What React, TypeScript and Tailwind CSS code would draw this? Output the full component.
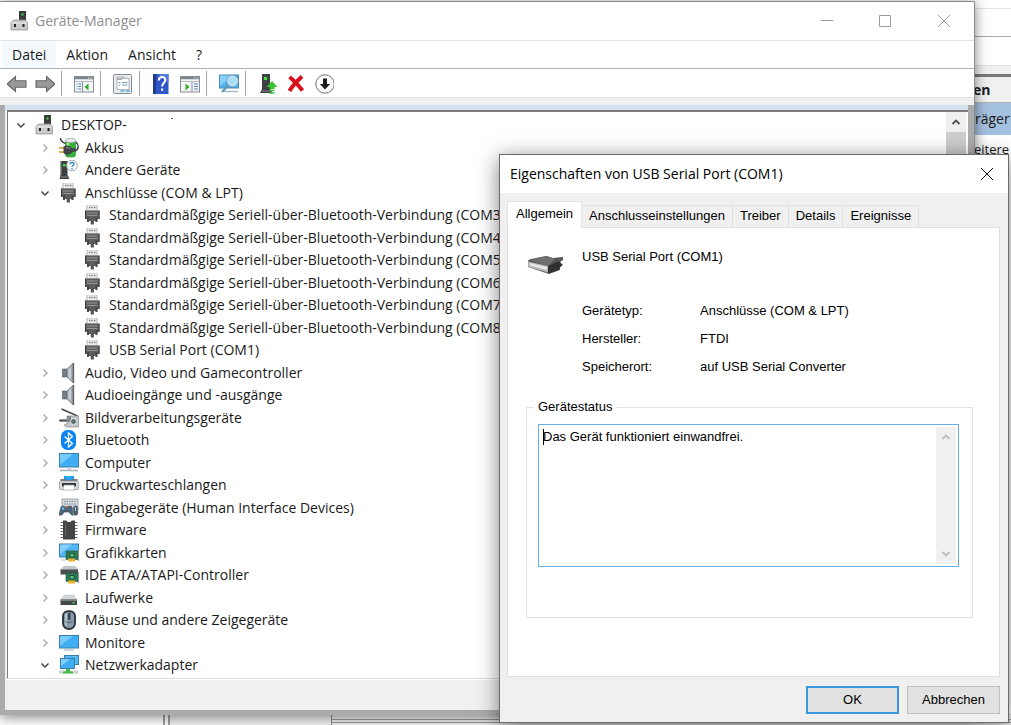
import type { ReactNode } from 'react';

type IconProps = { children: ReactNode; className?: string };

const Icon = ({ children, className = 'h-5 w-5' }: IconProps) => (
  <svg viewBox="0 0 20 20" className={`${className} shrink-0`} fill="none" aria-hidden="true">
    {children}
  </svg>
);

const icons: Record<string, ReactNode> = {
  root: (
    <>
      <rect x="9" y="0" width="7" height="11" fill="#3b3b3b" />
      <rect x="11.5" y="2.5" width="2" height="2" fill="#3ce04a" />
      <path d="M1 11.500 3.500 9h12l2 2.500v7.500H1z" fill="#c9cacb" stroke="#8b8c8e" strokeWidth=".7" />
      <path d="M1.500 12h15.500" stroke="#ececec" />
      <rect x="4" y="13" width="2" height="3" fill="#222" />
      <rect x="12.500" y="13" width="2" height="3" fill="#222" />
    </>
  ),
  battery: (
    <>
      <rect x="6.500" y="1.500" width="10" height="17.500" rx="2.500" fill="#35b335" stroke="#258a2b" strokeWidth=".6" />
      <path d="M9 5v9" stroke="#a7f07c" strokeWidth="2.500" />
      <ellipse cx="11.500" cy="2.500" rx="5" ry="2.200" fill="#e4e9ed" stroke="#8f9aa6" strokeWidth=".7" />
      <path d="M1.500 0c0 3 2 4.500 5 5.500M17 4c3 3 3 8.500-1.500 9" stroke="#3a3f44" strokeWidth="1.400" />
      <path d="M0 10h6M0 14h6" stroke="#c29a1d" strokeWidth="1.600" />
      <path d="M4.500 8.500c4-2 7-.5 8.500 2l3.500-.5v3.500l-3.500.5c-2 3.500-6 3.500-8.500 1z" fill="#40444a" />
      <path d="M7 10c2-.8 3.500 0 4.500 1" stroke="#9da2a8" />
    </>
  ),
  other: (
    <>
      <path d="M1.500 1h7v14l2 4H.5l1-4z" fill="#3c3e40" />
      <path d="M2.500 1v14" stroke="#63676a" />
      <rect x="4" y="4" width="2.500" height="2.500" fill="#42e53b" />
      <path d="M1 17h9" stroke="#85888a" />
      <circle cx="13" cy="5.500" r="5.300" fill="#f5f8fb" stroke="#a7adb4" strokeWidth="1" />
      <path d="M11.200 4.200c0-2.500 3.800-2.400 3.800-.1 0 1.500-2 1.500-2 3M13 8v1.300" stroke="#2783c6" strokeWidth="1.300" />
    </>
  ),
  port: (
    <g transform="translate(-1 -1)">
      <path d="M5 .8h10v6H5z" fill="#ededed" stroke="#a4a4a4" strokeWidth=".8" />
      <path d="M7 3.500h1.400M9.500 3.500h1.400M12 3.500h1.400" stroke="#777" strokeWidth="1.400" />
      <path d="M3 6.500h14.500V15h-2l-1 2H6l-1-2H3z" fill="#5c5e60" />
      <path d="M3.500 6.500V15M17 6.500V15" stroke="#3b3d3f" />
      <path d="M5 9h10.500M5 11.500h10.500" stroke="#929496" />
      <path d="M5 13h2v5H5zM13.500 13h2v5h-2z" fill="#454749" />
      <path d="M8.700 16h3.200v4.500H8.700z" fill="#54575a" />
    </g>
  ),
  speaker: (
    <>
      <path d="M3.500 6h4.500v8H3.500z" fill="#747e86" stroke="#50575c" strokeWidth=".6" />
      <path d="M8 6 14 .3v19.400L8 14z" fill="#a3abb1" stroke="#70777d" strokeWidth=".7" />
      <path d="m9.500 6.500 2.500-3v13l-2.500-3z" fill="#ccd1d5" />
      <path d="M14.500 0v20" stroke="#5b646b" strokeWidth="1.300" />
    </>
  ),
  imaging: (
    <>
      <path d="m2.500 1 16 7" stroke="#4a4a4a" strokeWidth="1.700" />
      <path d="M1 11h9v3H1z" fill="#9a9c9e" />
      <path d="M0 12.500h10" stroke="#565656" strokeWidth="1.400" />
      <path d="M8 8h11.500v11H7l-2-2 3-1z" fill="#c5c7c9" stroke="#8c8e90" strokeWidth=".7" />
      <path d="M8 8h4v6H8z" fill="#85888a" />
      <circle cx="14.500" cy="13.500" r="2.800" fill="#4c555b" stroke="#e6e6e6" />
      <circle cx="14.500" cy="13.500" r="1" fill="#42a29f" />
    </>
  ),
  bluetooth: (
    <>
      <rect x="2" y="0" width="15" height="20" rx="6.500" fill="#0a84f5" />
      <path d="m5.500 6.500 8 7-4 3.500V3l4 3.500-8 7" stroke="#fff" strokeWidth="1.300" />
    </>
  ),
  computer: (
    <>
      <rect x=".5" y=".5" width="19" height="13.500" fill="#41aef3" stroke="#397da9" />
      <path d="M1 1h13L1 12z" fill="#75cbfb" />
      <path d="M8 14.500h4v2H8z" fill="#cfd5da" />
      <path d="M1 17.500h18" stroke="#a4b4c2" strokeWidth="1.600" />
    </>
  ),
  printer: (
    <>
      <path d="M5 1h10v6H5z" fill="#209bea" />
      <path d="M8 1h3v3H8z" fill="#32d5bf" />
      <path d="M1.500 4h17v4h-17z" fill="#75797d" />
      <path d="M7 2h6v3H7z" fill="#29a0ec" />
      <rect x=".5" y="6" width="19" height="8.500" rx="1" fill="#d7d9db" stroke="#8d9195" strokeWidth=".7" />
      <path d="M3 8h14v3.500H3z" fill="#2f3438" />
      <path d="M5 10h10l1 5H4z" fill="#fff" stroke="#9ca0a3" strokeWidth=".7" />
    </>
  ),
  hid: (
    <>
      <path d="M3 1h16v11H3z" fill="#d5dade" stroke="#828b92" strokeWidth=".7" />
      <path d="M5 3.500h12M5 6h12" stroke="#7e8990" strokeWidth="1.200" strokeDasharray="1.500 1" />
      <path d="M2 9c2-2 3 0 5 0s4-2 6 0l2 8c-3 1-4-2-5-3H5c-1 2-2 4-5 3z" fill="#4b6575" stroke="#31434f" strokeWidth=".6" />
      <circle cx="4" cy="10.500" r="1.300" fill="#6db7ed" />
      <circle cx="8" cy="9" r="1" fill="#ef5b45" />
      <rect x="14" y="7.500" width="5" height="10" rx="2.200" fill="#485b69" stroke="#a7b4bc" strokeWidth=".6" />
      <path d="M16.500 9v4" stroke="#c7d2d9" />
    </>
  ),
  firmware: (
    <>
      <path d="M1.500 2.500h17M1.500 5.500h17M1.500 8.500h17M1.500 11.500h17M1.500 14.500h17M1.500 17.500h17" stroke="#6a6a6a" strokeWidth="1.200" />
      <path d="M4 .5h3.500c0 2 5 2 5 0H16v19H4z" fill="#424446" />
      <path d="M6.500 4v13" stroke="#5e6062" />
    </>
  ),
  graphics: (
    <>
      <rect x=".5" y="1" width="19" height="13" fill="#51b7f5" stroke="#397da9" />
      <path d="M1 1.500h12L1 11z" fill="#86d0fb" />
      <path d="M7 8h12v8.500H7z" fill="#2d7953" stroke="#1d5b3d" strokeWidth=".6" />
      <rect x="11" y="10.500" width="4" height="3.500" fill="#5bc47d" stroke="#163e2a" strokeWidth=".7" />
      <path d="M9 15.500h7v3H9z" fill="#edb326" />
      <path d="M19.500 7v11" stroke="#93999e" />
      <path d="M2 17h5" stroke="#a8b9c4" />
    </>
  ),
  ide: (
    <>
      <path d="M4.500 1h12l3 4H1.500z" fill="#c1c5c8" />
      <path d="M1.500 4.500h17.500v5H1.500z" fill="#4a4e51" />
      <path d="M7 8h12v8.500H7z" fill="#2d7953" stroke="#1d5b3d" strokeWidth=".6" />
      <rect x="11" y="10.500" width="4" height="3.500" fill="#5bc47d" stroke="#163e2a" strokeWidth=".7" />
      <path d="M9 15.500h7v3H9z" fill="#edb326" />
      <path d="M19.500 7v11" stroke="#93999e" />
    </>
  ),
  drive: (
    <>
      <path d="M5 7h9.500l3.500 5H1.500z" fill="#d2d5d7" stroke="#bcc0c2" strokeWidth=".5" />
      <path d="M1.500 11.500H18v5.500H1.500z" fill="#44484b" />
      <path d="M1.500 12.300H18" stroke="#8a8e91" />
      <rect x="13.500" y="14" width="2" height="1.500" fill="#42df4f" />
    </>
  ),
  mouse: (
    <>
      <path d="M4 6c0-6.500 12-6.500 12 0v7c0 8-12 8-12 0z" fill="#879bab" stroke="#2c3338" strokeWidth="1.900" />
      <path d="M7 3.500v12" stroke="#bdcbd5" strokeWidth="1.500" />
      <path d="M6 11c2 2 6 2 8 0" stroke="#4c5b66" strokeWidth=".8" />
      <rect x="9" y="2.500" width="2.500" height="7.500" rx="1" fill="#39444c" />
    </>
  ),
  monitor: (
    <>
      <rect x=".5" y="2.500" width="19" height="12.500" fill="#41aef3" stroke="#397da9" />
      <path d="m1 3 13 0-13 10z" fill="#75cbfb" />
      <path d="M8 15.500h4v1H8z" fill="#b4bfc8" />
      <path d="M5 17h10" stroke="#a4b4c2" />
    </>
  ),
  network: (
    <>
      <rect x="5.500" y=".5" width="14" height="9" fill="#54b8f2" stroke="#397da9" />
      <rect x="1.500" y="3.500" width="14" height="10" fill="#41aef3" stroke="#397da9" />
      <path d="M2 4h9l-9 7z" fill="#83d0fb" />
      <path d="M0 17h19" stroke="#ccd0d2" strokeWidth="3" />
      <path d="M7 14h4v2l3 1v1.500H4V17l3-1z" fill="#49bd45" />
    </>
  ),
  adapter: <rect x="4.500" y="0" width="15" height="10" fill="#51b7f5" stroke="#397da9" strokeWidth="2" />,
};

const BLUETOOTH_PORT = 'Standardmäßgige Seriell-über-Bluetooth-Verbindung';

type Node = { label: string; icon: string; level: number; open?: boolean };

const nodes: Node[] = [
  { label: 'DESKTOP-', icon: 'root', level: 0, open: true },
  { label: 'Akkus', icon: 'battery', level: 1 },
  { label: 'Andere Geräte', icon: 'other', level: 1 },
  { label: 'Anschlüsse (COM & LPT)', icon: 'port', level: 1, open: true },
  { label: `${BLUETOOTH_PORT} (COM3)`, icon: 'port', level: 2 },
  { label: `${BLUETOOTH_PORT} (COM4)`, icon: 'port', level: 2 },
  { label: `${BLUETOOTH_PORT} (COM5)`, icon: 'port', level: 2 },
  { label: `${BLUETOOTH_PORT} (COM6)`, icon: 'port', level: 2 },
  { label: `${BLUETOOTH_PORT} (COM7)`, icon: 'port', level: 2 },
  { label: `${BLUETOOTH_PORT} (COM8)`, icon: 'port', level: 2 },
  { label: 'USB Serial Port (COM1)', icon: 'port', level: 2 },
  { label: 'Audio, Video und Gamecontroller', icon: 'speaker', level: 1 },
  { label: 'Audioeingänge und -ausgänge', icon: 'speaker', level: 1 },
  { label: 'Bildverarbeitungsgeräte', icon: 'imaging', level: 1 },
  { label: 'Bluetooth', icon: 'bluetooth', level: 1 },
  { label: 'Computer', icon: 'computer', level: 1 },
  { label: 'Druckwarteschlangen', icon: 'printer', level: 1 },
  { label: 'Eingabegeräte (Human Interface Devices)', icon: 'hid', level: 1 },
  { label: 'Firmware', icon: 'firmware', level: 1 },
  { label: 'Grafikkarten', icon: 'graphics', level: 1 },
  { label: 'IDE ATA/ATAPI-Controller', icon: 'ide', level: 1 },
  { label: 'Laufwerke', icon: 'drive', level: 1 },
  { label: 'Mäuse und andere Zeigegeräte', icon: 'mouse', level: 1 },
  { label: 'Monitore', icon: 'monitor', level: 1 },
  { label: 'Netzwerkadapter', icon: 'network', level: 1, open: true },
  { label: '', icon: 'adapter', level: 2 },
];

const indents = ['pl-[3px]', 'pl-[27px]', 'pl-[51px]'];

const Chevron = ({ open }: { open?: boolean }) => (
  <svg viewBox="0 0 20 20" className="h-5 w-5" fill="none" aria-hidden="true">
    {open ? (
      <path d="m6.500 8.500 3.500 3.500 3.500-3.500" stroke="#404040" strokeWidth="1.400" />
    ) : (
      <path d="m8.500 6.500 3.500 3.500-3.500 3.500" stroke="#a6a6a6" strokeWidth="1.300" />
    )}
  </svg>
);

const TreeRow = ({ node }: { node: Node }) => (
  <li className={`flex shrink-0 items-center odd:h-[22px] even:h-[23px] ${indents[node.level]}`}>
    <div className="mr-1 h-5 w-5">
      {node.level < 2 && (
        <button type="button" aria-label={node.label} className="block">
          <Chevron open={node.open} />
        </button>
      )}
    </div>
    <Icon>{icons[node.icon]}</Icon>
    <span className="ml-1.5 whitespace-nowrap">{node.label}</span>
    {node.level === 0 && <span className="mt-1 ml-11 h-px w-0.5 self-start bg-[#555]" />}
  </li>
);

const ScrollArrow = ({ down, color }: { down?: boolean; color: string }) => (
  <svg viewBox="0 0 20 20" className="h-5 w-5" fill="none" aria-hidden="true">
    <path d={down ? 'm6.500 8 3.500 3.500L13.500 8' : 'm6.500 12 3.500-3.500 3.500 3.500'} stroke={color} strokeWidth="1.800" />
  </svg>
);

const paneFrame = (
  <>
    <rect x=".5" y="2.500" width="19" height="15.500" fill="#f5f6f7" stroke="#868c91" />
    <path d="M1 4h18" stroke="#7d878f" strokeWidth="2.500" />
    <path d="M14 4h1M16.500 4h1" stroke="#fff" />
    <path d="M1 7.500h18" stroke="#b4babf" />
  </>
);

const tools: { label: string; art: ReactNode }[][] = [
  [
    {
      label: 'Zurück',
      art: <path d="M0 10l8.500-7.500v4.300H19v6.400H8.500v4.300z" fill="#999" stroke="#676767" strokeWidth="1.100" />,
    },
    {
      label: 'Vorwärts',
      art: <path d="M20 10l-8.500-7.500v4.300H1v6.400h10.500v4.300z" fill="#999" stroke="#676767" strokeWidth="1.100" />,
    },
  ],
  [
    {
      label: 'Konsolenstruktur',
      art: (
        <>
          {paneFrame}
          <path d="M8.500 8v10" stroke="#868c91" />
          <path d="M2.500 10h1M2.500 12.500h1M2.500 15h1M4.500 10h2.500M4.500 12.500h2.500M4.500 15h2.500" stroke="#427fae" />
          <path d="m14.500 9.500-4 3.500 4 3.500z" fill="#37a928" />
        </>
      ),
    },
  ],
  [
    {
      label: 'Eigenschaften',
      art: (
        <>
          <rect x=".5" y=".5" width="18" height="19" rx="1" fill="#e9ebed" stroke="#858a8e" />
          <rect x="4" y="4.500" width="12" height="11" fill="#fff" stroke="#9ba4ac" strokeWidth=".8" />
          <path d="M3 3h9M4 5.500h5" stroke="#a5abb0" />
          <path d="M5.500 8.500h2M5.500 11h2M9 8.500h5.500M9 11h5.500" stroke="#729dbb" />
          <path d="M7.500 17h4M13 17h4" stroke="#4fb2de" strokeWidth="1.600" />
        </>
      ),
    },
  ],
  [
    {
      label: 'Hilfe',
      art: (
        <>
          <path d="M1 0h15.500v20H1z" fill="#3057c7" />
          <path d="M1 0h3v20H1z" fill="#203b8d" />
          <path d="M6 0h10.500v9z" fill="#5479df" />
          <path d="M6.800 6.500c0-4.500 6.500-4.500 6.500-.5 0 3-3.200 3-3.200 6.500M10.100 14.500v2.300" stroke="#fff" strokeWidth="2" />
        </>
      ),
    },
    {
      label: 'Aktionsbereich',
      art: (
        <>
          {paneFrame}
          <path d="M12 8v10" stroke="#868c91" />
          <path d="M14 10h4M14 12.500h4M14 15h4" stroke="#427fae" />
          <path d="m5.500 9.500 4 3.500-4 3.500z" fill="#37a928" />
        </>
      ),
    },
  ],
  [
    {
      label: 'Nach geänderter Hardware suchen',
      art: (
        <>
          <rect x=".5" y="1" width="19" height="13" fill="#4bb2ed" stroke="#518eb3" />
          <path d="M1 1.500h13L1 12z" fill="#85cff8" />
          <path d="M2 17.500h17" stroke="#a8bac6" strokeWidth="1.500" />
          <path d="m9.500 11-6 6.500" stroke="#6897b4" strokeWidth="2.400" />
          <circle cx="13.500" cy="7" r="5" fill="#a8defa" stroke="#d3e7f2" strokeWidth="1.600" />
          <circle cx="13.500" cy="7" r="5.700" stroke="#5991b5" strokeWidth=".7" />
        </>
      ),
    },
  ],
  [
    {
      label: 'Treiber aktualisieren',
      art: (
        <>
          <path d="M4 0h8v14l2 4v1H2l2-4z" fill="#3e4143" />
          <path d="M3 17h10" stroke="#8a8d8f" />
          <rect x="6" y="3" width="3" height="3" fill="#43e83d" />
          <path d="m14 7-5.500 6h3v2h5v-2h3z" fill="#3ac232" />
          <path d="M11.500 16.500h5M11.500 19h5" stroke="#3ac232" strokeWidth="1.500" />
        </>
      ),
    },
    {
      label: 'Gerät deinstallieren',
      art: <path d="M3.500 3c4.500 3.500 9 8.500 13 13.500M16 2.500C11 7 6.500 11.500 3.500 17" stroke="#d9101b" strokeWidth="4" />,
    },
    {
      label: 'Gerät deaktivieren',
      art: (
        <>
          <circle cx="11" cy="10" r="9.200" fill="#fdfdfd" stroke="#6c6c6c" strokeWidth="1" />
          <path d="M9 4.500h4V10h3.200l-5.200 5.500L5.800 10H9z" fill="#1e1e1e" />
        </>
      ),
    },
  ],
];

const MenuBar = () => (
  <nav className="flex h-7 items-stretch border-t border-[#e4e4e4] bg-white pl-0.5">
    {['Datei', 'Aktion', 'Ansicht', '?'].map((item) => (
      <button key={item} type="button" className="px-2.5 pt-px first:bg-[#f4f9fe]">
        {item}
      </button>
    ))}
  </nav>
);

const Toolbar = () => (
  <div className="flex h-[30px] items-center border-t border-b border-t-[#b4b4b4] border-b-[#e0e0e0] bg-white pt-px pl-[7px]">
    {tools.map((group, i) => (
      <div key={group[0].label} className="flex items-center gap-2">
        {i > 0 && <span className="-mr-2 ml-1.5 h-[25px] w-px bg-[#a5a5a5]" />}
        {group.map((tool, j) => (
          <button key={tool.label} type="button" aria-label={tool.label} className={i > 0 && j === 0 ? 'ml-3' : ''}>
            <Icon>{tool.art}</Icon>
          </button>
        ))}
      </div>
    ))}
  </div>
);

const DeviceManager = () => (
  <main className="absolute top-px right-9 bottom-2.5 left-0 flex flex-col border-t border-r border-[#8c8c8c] bg-[#ababab] font-['Open_Sans',sans-serif] text-sm text-[#1a1a1a] shadow-[0_2px_12px_rgba(0,0,0,0.5)]">
    <header className="flex h-[38px] items-center bg-white pl-2.5">
      <Icon>{icons.root}</Icon>
      <h1 className="ml-[5px] flex-1 text-[#8f8f8f]">Geräte-Manager</h1>
      <div className="flex items-center text-[#999]">
        <button type="button" aria-label="Minimieren" className="flex w-[58px] justify-center">
          <svg viewBox="0 0 14 14" className="h-3.5 w-3.5" stroke="currentColor"><path d="M1 6.500h12" /></svg>
        </button>
        <button type="button" aria-label="Maximieren" className="flex w-[58px] justify-center">
          <svg viewBox="0 0 14 14" className="h-3.5 w-3.5" fill="none" stroke="currentColor"><path d="M1.500 1.500h11v11h-11z" /></svg>
        </button>
        <button type="button" aria-label="Schließen" className="flex w-[60px] justify-center">
          <svg viewBox="0 0 14 14" className="h-3.5 w-3.5" stroke="currentColor"><path d="m1 1 12 12M13 1 1 13" /></svg>
        </button>
      </div>
    </header>
    <MenuBar />
    <Toolbar />
    <div className="h-[7px] bg-[#f0f0f0]" />
    <div className="mr-1.5 ml-[5px] flex min-h-0 flex-1 flex-col bg-[#f0f0f0]">
      <div className="h-[5px] bg-[#d4e1ee]" />
      <div className="ml-0.5 flex min-h-0 flex-1 border-t-2 border-l border-[#7c7c7c] bg-white">
        <ul className="flex min-w-0 flex-1 flex-col overflow-hidden pt-0.5">
          {nodes.map((node, i) => (
            <TreeRow key={i} node={node} />
          ))}
        </ul>
        <div className="w-5 bg-[#f0f0f0]">
          <ScrollArrow color="#505050" />
          <div className="h-96 bg-[#cdcdcd]" />
        </div>
        <div className="w-0.5 bg-white" />
      </div>
      <div className="border-t border-[#dcdcdc] bg-white pt-px">
        <footer className="h-[30px] bg-[#f0f0f0]" />
      </div>
    </div>
    <div className="h-[5px]" />
  </main>
);

const tabs = ['Allgemein', 'Anschlusseinstellungen', 'Treiber', 'Details', 'Ereignisse'];

const facts = [
  ['Gerätetyp:', 'Anschlüsse (COM & LPT)'],
  ['Hersteller:', 'FTDI'],
  ['Speicherort:', 'auf USB Serial Converter'],
];

const PropertiesDialog = () => (
  <section
    role="dialog"
    aria-labelledby="dialog-title"
    className="absolute right-0.5 bottom-0.5 w-[510px] border border-[#6a6a6a] bg-[#f0f0f0] font-['Liberation_Sans',sans-serif] text-sm text-black shadow-[0_4px_20px_rgba(0,0,0,0.5)]"
  >
    <header className="flex h-[38px] items-center bg-white pl-2.5">
      <h2 id="dialog-title" className="flex-1 font-['Open_Sans',sans-serif] text-sm">
        Eigenschaften von USB Serial Port (COM1)
      </h2>
      <button type="button" aria-label="Schließen" className="mr-3.5">
        <svg viewBox="0 0 14 14" className="h-3.5 w-3.5" stroke="#111"><path d="m1 1 12 12M13 1 1 13" /></svg>
      </button>
    </header>
    <div className="pt-2 pr-2 pb-2 pl-[7px]">
      <div role="tablist" className="flex items-end text-[13px]">
        {tabs.map((tab, i) => (
          <button
            key={tab}
            type="button"
            role="tab"
            aria-selected={i === 0}
            className={
              i === 0
                ? 'relative -mb-px h-[27px] border border-b-0 border-[#e3e3e3] bg-white px-2 pb-0.5'
                : 'h-[22px] border border-b-0 border-l-0 border-[#e0e0e0] px-[7px]'
            }
          >
            {tab}
          </button>
        ))}
      </div>
      <div className="h-[450px] border border-[#e0e0e0] bg-white px-[18px] pt-5">
        <div className="flex h-[18px] items-center">
          <svg viewBox="0 0 40 24" className="mt-4 h-6 w-10 shrink-0" aria-hidden="true">
            <path d="M2 9c0-2 1-2.500 3-3l15-3 7 2 10-1v3l-3 2 3 3-3 2v3l-11 4L2 14z" fill="#555" />
            <path d="m4 7 17-4 8 3-7 7z" fill="#6f6f6f" />
            <path d="M2 8.500 22 13v6.500L2 14z" fill="#b6b6b6" />
            <path d="m4 10 17 4v3L4 12.500z" fill="#e8e8e8" />
            <path d="m22 13 11-5 3 4-4 5-10 3.500z" fill="#303030" />
          </svg>
          <span className="ml-4 text-[13px]">USB Serial Port (COM1)</span>
        </div>
        <dl className="mt-9 ml-14 grid grid-cols-[118px_1fr] gap-y-2.5 text-[13px] leading-[18px]">
          {facts.map(([name, value]) => (
            <div key={name} className="contents">
              <dt>{name}</dt>
              <dd>{value}</dd>
            </div>
          ))}
        </dl>
        <fieldset className="mt-[22px] mr-2 h-[220px] border border-[#e2e2e2] pr-[13px] pl-[11px]">
          <legend className="-ml-1 px-1 text-[13px] leading-[18px]">
            <label htmlFor="status">Gerätestatus</label>
          </legend>
          <div className="relative mt-2 flex h-[143px] border border-[#66afe6] p-0.5">
            <textarea
              id="status"
              readOnly
              defaultValue="Das Gerät funktioniert einwandfrei."
              className="block flex-1 resize-none overflow-hidden bg-white pt-px pl-0.5 text-[13px] leading-[18px] outline-none"
            />
            <span className="absolute top-1 left-1 h-4 w-px bg-black" />
            <div className="flex w-5 flex-col justify-between bg-[#f0f0f0]">
              <ScrollArrow color="#bdbdbd" />
              <ScrollArrow down color="#bdbdbd" />
            </div>
          </div>
        </fieldset>
      </div>
      <div className="mt-[9px] flex justify-end gap-2 text-[13px]">
        <button type="button" className="h-7 w-[93px] border-2 border-[#3c96dc] bg-[#e1e1e1]">
          OK
        </button>
        <button type="button" className="h-7 w-[93px] border border-[#bdbdbd] bg-[#e1e1e1]">
          Abbrechen
        </button>
      </div>
    </div>
  </section>
);

// Console window that stays behind the other two
const BackgroundConsole = () => (
  <div className="flex h-full flex-col justify-between bg-white font-['Open_Sans',sans-serif] text-sm text-[#1a1a1a]">
    <div className="ml-auto w-10">
      <div className="h-[9px] border-b border-[#e2e2e2]" />
      <div className="h-7 border-b border-[#a8a8a8]" />
      <div className="h-[29px] border-b border-[#e2e2e2]" />
      <div className="h-[11px] border-b-[3px] border-[#777] bg-[#f0f0f0]" />
      <div className="flex h-[26px] items-center border-b border-[#b4b4b4] bg-[#f0f0f0] pl-0.5 font-bold">en</div>
      <div className="flex h-8 items-center bg-[#a5c1e0] pl-1">räger</div>
      <div className="flex h-7 items-center pl-[3px] text-[13px]">eitere</div>
    </div>
    <div className="flex h-3">
      <div className="w-[163px]" />
      <div className="w-[7px] border-x-2 border-[#a0a0a0]" />
      <div className="w-[161px] bg-[#f0f0f0]" />
      <div className="flex-1 border-l border-[#8c8c8c] bg-[#f0f0f0] pt-1.5">
        <div className="h-1 border-y border-[#9a9a9a]" />
      </div>
    </div>
  </div>
);

export default function App() {
  return (
    <div className="relative h-screen w-full overflow-hidden bg-[#ececec]">
      <BackgroundConsole />
      <DeviceManager />
      <PropertiesDialog />
    </div>
  );
}
